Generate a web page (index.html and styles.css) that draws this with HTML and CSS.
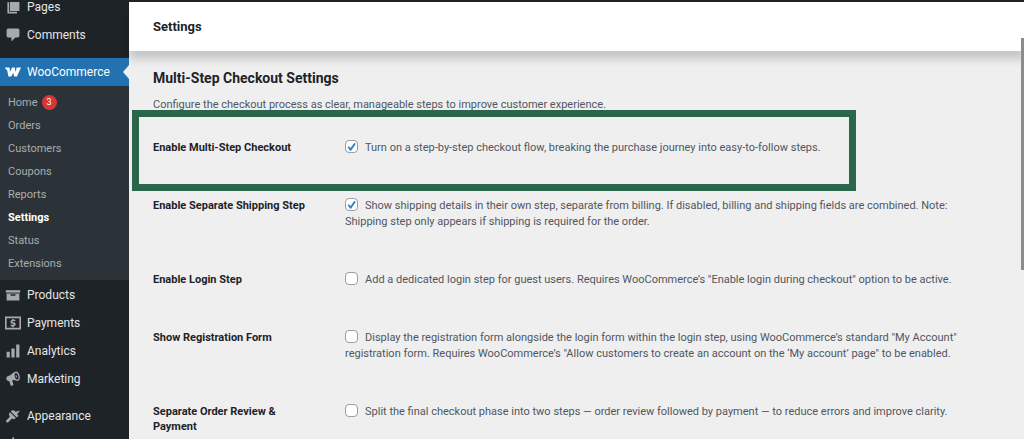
FILE: index.html
```html
<!DOCTYPE html>
<html lang="en">
<head>
  <meta charset="UTF-8">
  <meta name="viewport" content="width=device-width, initial-scale=1.0">
  <title>Settings - WooCommerce</title>
  <link rel="stylesheet" href="styles.css">
</head>
<body>
  <div class="admin-bar"></div>
  <div class="wrap">
    <nav class="sidebar">
      <ul class="menu">
        <li><a href="#"><svg viewBox="0 0 20 20"><path d="M6 15V2h12v13z"/><path d="M3 4v14h12v-2H5V4z"/></svg>Pages</a></li>
        <li><a href="#"><svg viewBox="0 0 20 20"><path d="M4 2h12c1.100 0 2 .9 2 2v7c0 1.100-.9 2-2 2h-3l-5 5v-5H4c-1.100 0-2-.9-2-2V4c0-1.100.9-2 2-2z"/></svg>Comments</a></li>
        <li class="separator"></li>
        <li class="current">
          <a href="#"><svg viewBox="0 0 20 20"><path d="M0 4.500h5.700L6.200 10 8.900 4.500h3.400L12.900 10l1.800-5.500H20L15 15.500h-3.600l-1-4.500-2.500 4.500H4.300L2.800 8.300C2.600 7.300 2 7 1 7z"/></svg>WooCommerce</a>
          <ul class="submenu">
            <li><a href="#">Home <span class="badge">3</span></a></li>
            <li><a href="#">Orders</a></li>
            <li><a href="#">Customers</a></li>
            <li><a href="#">Coupons</a></li>
            <li><a href="#">Reports</a></li>
            <li><a href="#" class="active">Settings</a></li>
            <li><a href="#">Status</a></li>
            <li><a href="#">Extensions</a></li>
          </ul>
        </li>
        <li><a href="#"><svg viewBox="0 0 20 20"><path d="M1 4h18v3H1z"/><path fill-rule="evenodd" d="M2 8h16v9H2zM7 9v2h6V9z"/></svg>Products</a></li>
        <li><a href="#"><svg viewBox="0 0 20 20"><path fill-rule="evenodd" d="M0 2h20v16H0zM2 4v12h16V4z"/><path d="M13 7.500V6h-2V5H9v1.200C5.800 7 6.300 10.500 9 11h1.500v1.300H7V14h2v1.200h2V14c3.200-.6 3-4.400.2-4.900H9.300V7.700z"/></svg>Payments</a></li>
        <li><a href="#"><svg viewBox="0 0 20 20"><path d="M2 11h4v7H2zM8 7h4v11H8zM14 2h4v16h-4z"/></svg>Analytics</a></li>
        <li><a href="#"><svg viewBox="0 0 20 20"><path fill-rule="evenodd" d="M18.200 5.900c.7 3 .2 5.800-2 6.400-1.300.3-3.100-.5-4.900-1L9 11.600l1.600 6-3.200 1.100-2.200-6.300C1.500 13.400 0 7.500 4 6.400 8 5.100 9.800 1.500 13 .8c2.600-.6 4.500 2 5.200 5.100zM15.600 10.800c1.300-.4 1.600-2.400 1-4.600-.6-2.300-1.900-3.900-3.200-3.600-1.300.4-1.700 2.500-1.100 4.700.6 2.300 2 3.800 3.300 3.500zM13.300 5.200c1.600-.4 2.300 2.700.9 3.100-.6-.4-1.100-2.200-.9-3.100z"/></svg>Marketing</a></li>
        <li class="separator"></li>
        <li><a href="#"><svg viewBox="0 0 20 20"><path d="M14.500 11.500 7.200 4.300C8.800 3 10 2.300 11.500 3.200L13 4.800l5.800-1.600-3.600 4.500 1.400 1.700c.5 1-.7 2-2.100 2.100zM6.300 5.300l7.200 7.200-1.800 1.500-2.900-.8-4.700 4.500C2.500 19.100.2 17.300 1.500 15.700l4.400-4.600-1.100-3.600z"/></svg>Appearance</a></li>
        <li><a href="#"><svg viewBox="0 0 20 20"><path d="M10 1l1.500 1.500L10 7l4 4 4-3 1 1-3 5-5 1-4 4-2-2 4-4-2-5z"/></svg></a></li>
      </ul>
    </nav>
    <main class="content">
      <header class="page-header">
        <h1>Settings</h1>
      </header>
      <form class="settings">
        <h2>Multi-Step Checkout Settings</h2>
        <p class="intro">Configure the checkout process as clear, manageable steps to improve customer experience.</p>

        <div class="row highlight">
          <label class="name" for="multiStep">Enable Multi-Step Checkout</label>
          <label class="option"><input type="checkbox" id="multiStep" checked>Turn on a step-by-step checkout flow, breaking the purchase journey into easy-to-follow steps.</label>
        </div>
        <div class="row">
          <label class="name" for="shippingStep">Enable Separate Shipping Step</label>
          <label class="option"><input type="checkbox" id="shippingStep" checked>Show shipping details in their own step, separate from billing. If disabled, billing and shipping fields are combined. Note: Shipping step only appears if shipping is required for the order.</label>
        </div>
        <div class="row">
          <label class="name" for="loginStep">Enable Login Step</label>
          <label class="option"><input type="checkbox" id="loginStep">Add a dedicated login step for guest users. Requires WooCommerce’s "Enable login during checkout" option to be active.</label>
        </div>
        <div class="row">
          <label class="name" for="registerForm">Show Registration Form</label>
          <label class="option"><input type="checkbox" id="registerForm">Display the registration form alongside the login form within the login step, using WooCommerce’s standard "My Account" registration form. Requires WooCommerce’s "Allow customers to create an account on the ‘My account’ page" to be enabled.</label>
        </div>
        <div class="row">
          <label class="name" for="orderReview">Separate Order Review &amp; Payment</label>
          <label class="option"><input type="checkbox" id="orderReview">Split the final checkout phase into two steps — order review followed by payment — to reduce errors and improve clarity.</label>
        </div>
      </form>
    </main>
  </div>
  <div class="scroll-thumb"></div>
</body>
</html>
```

FILE: styles.css
```css
* {
  box-sizing: border-box;
}
body {
  margin: 0;
  height: 100vh;
  overflow: hidden;
  display: flex;
  flex-direction: column;
  font-family: Roboto, sans-serif;
  font-size: 11px;
  line-height: 16px;
  color: #50575e;
  background: #efeff0;
}
.admin-bar {
  flex: none;
  height: 2px;
  background: #1d2327;
  z-index: 2;
}
.wrap {
  flex: 1;
  min-height: 0;
  display: flex;
}

/* admin menu */
.sidebar {
  flex: none;
  width: 129px;
  overflow: hidden;
  background: #1d2327;
}
.menu,
.submenu {
  margin: 0;
  padding: 0;
  list-style: none;
}
.menu {
  margin-top: -9px;
}
.menu a {
  display: flex;
  align-items: center;
  gap: 6px;
  height: 28px;
  padding-left: 5px;
  font-size: 12px;
  color: #e4e5e6;
  text-decoration: none;
}
.menu svg {
  width: 16px;
  height: 16px;
  fill: #a7aaad;
}
.menu .separator {
  height: 9px;
}
.menu .current {
  position: relative;
  margin-bottom: 1px;
}
.menu .current > a {
  color: #fff;
  background: #2271b1;
}
.current > a svg {
  fill: #fff;
}
.current::after {
  content: "";
  position: absolute;
  top: 7px;
  right: 0;
  border: 7px solid transparent;
  border-left: 0;
  border-right: 6px solid #efeff0;
}
.submenu {
  padding: 5px 0;
  background: #2c3338;
}
.menu .submenu a {
  gap: 4px;
  height: 23px;
  padding-left: 8px;
  font-size: 11px;
  color: #a9acaf;
}
.menu .submenu .active {
  font-weight: 700;
  color: #fff;
}
.badge {
  width: 15px;
  height: 15px;
  border-radius: 50%;
  font-size: 9px;
  line-height: 15px;
  text-align: center;
  color: #fff;
  background: #d63638;
}

/* settings page */
.content {
  flex: 1;
  min-width: 0;
}
.page-header {
  padding: 17px 24px 16px;
  background: #fff;
  box-shadow: 0 8px 9px rgba(0, 0, 0, 0.18);
}
h1 {
  margin: 0;
  font-size: 13px;
  line-height: 16px;
  color: #1d2327;
}
.settings {
  padding: 18px 40px 0 24px;
}
h2 {
  margin: 0 0 10px;
  font-size: 14px;
  line-height: 18px;
  color: #1d2327;
}
.intro {
  margin: 0;
}
.row {
  position: relative;
  display: flex;
  padding: 21px 0;
}
.intro + .row {
  margin-top: 6px;
}
.highlight::before {
  content: "";
  position: absolute;
  top: -9px;
  bottom: -14px;
  left: -21px;
  right: 128px;
  border: 7px solid #2b654c;
  pointer-events: none;
}
.name {
  flex: none;
  width: 192px;
  padding-right: 30px;
  font-weight: 700;
  line-height: 15px;
  color: #1d2327;
}
.option {
  flex: 1;
}
.option input {
  appearance: none;
  width: 13px;
  height: 13px;
  margin: 0 7px 0 0;
  border: 1px solid #9a9da1;
  border-radius: 4px;
  background: #fff;
  vertical-align: -2px;
}
.option input:checked {
  background: #fff url("data:image/svg+xml,%3Csvg xmlns='http://www.w3.org/2000/svg' viewBox='0 0 20 20'%3E%3Cpath d='M14.800 3.500 18 5.200 9.300 17.500H7.500L3 11.300l2.200-1.800 3.100 3z' fill='%233582c4'/%3E%3C/svg%3E") center / 11px no-repeat;
}
.scroll-thumb {
  position: fixed;
  top: 38px;
  right: 0;
  width: 3px;
  height: 232px;
  background: #8c8c8c;
}
```
